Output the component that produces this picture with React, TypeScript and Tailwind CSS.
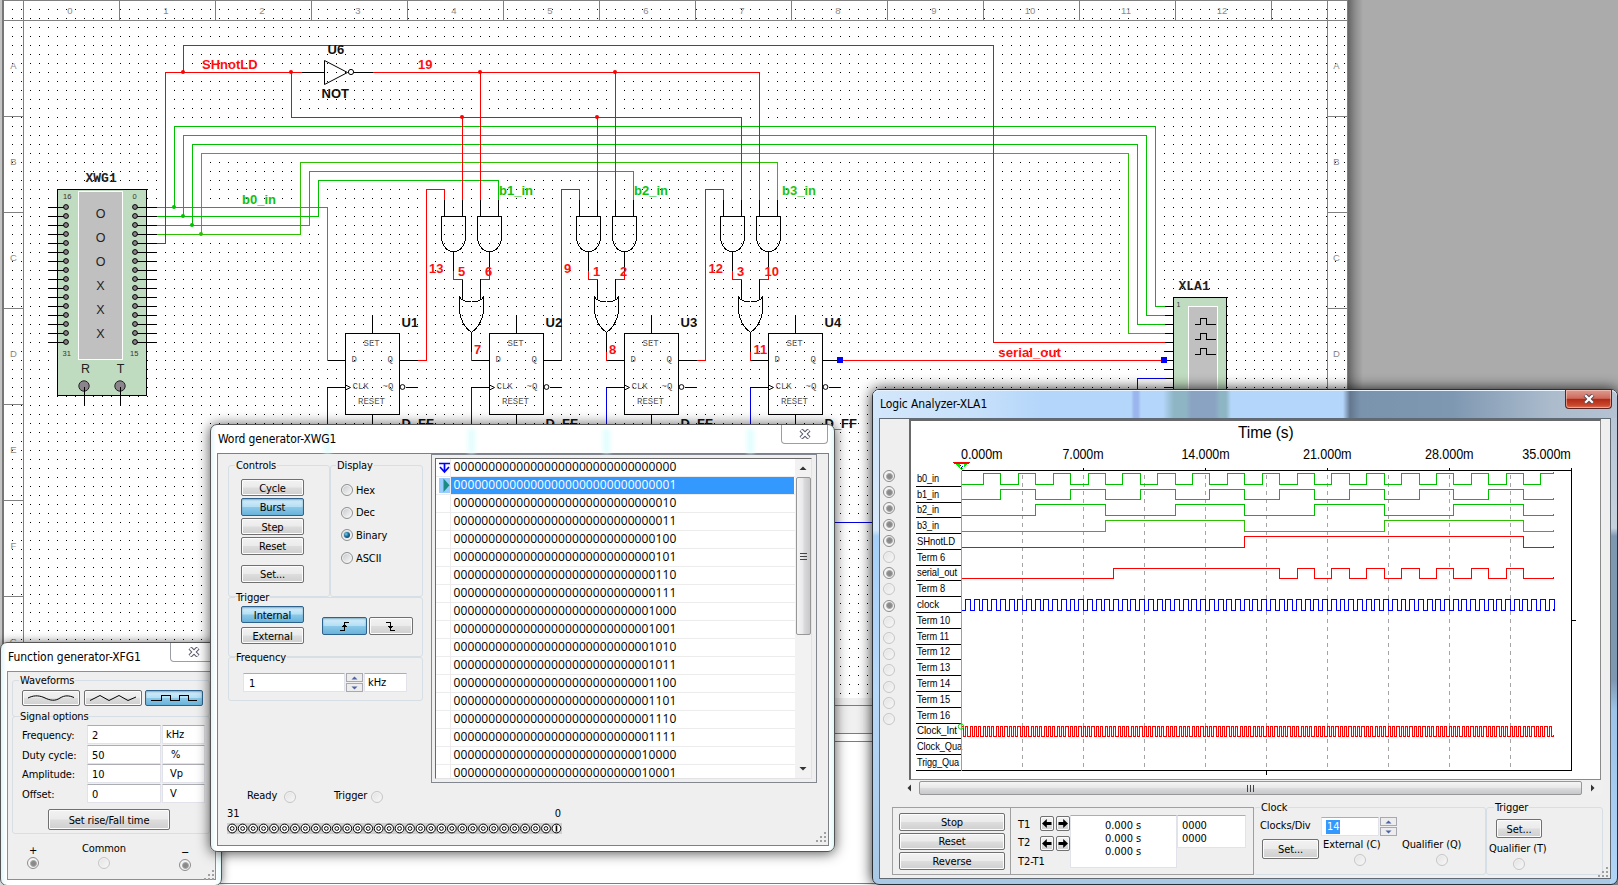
import React from "react";

const UI = "font-['DejaVu_Sans_Condensed','DejaVu_Sans','Noto_Sans',sans-serif] text-[11px] leading-[14px] tracking-[-0.1px] text-black";
const SANS = "'Liberation Sans', Arial, sans-serif";
const MONO = "'Liberation Mono', monospace";

const range = (n: number) => Array.from({ length: n }, (_, i) => i);

/* ---------- schematic sheet ---------- */

function Wire({ d, c = "#ff0000" }: { d: string; c?: string }) {
  return <path d={d} stroke={c} fill="none" strokeWidth={1} />;
}

function Net({ x, y, c = "#ff1010", children }: { x: number; y: number; c?: string; children: React.ReactNode }) {
  return (
    <text x={x} y={y} fill={c} fontFamily={SANS} fontWeight={700} fontSize={13}>
      {children}
    </text>
  );
}

function Junction({ x, y, c = "#ff0000" }: { x: number; y: number; c?: string }) {
  return <circle cx={x - 0.5} cy={y - 0.5} r={2} fill={c} shapeRendering="auto" />;
}

function AndGate({ x }: { x: number }) {
  return (
    <g stroke="#000" fill="none">
      <path d={`M${x} 216h24v21C${x + 24} 243 ${x + 20} 251 ${x + 12} 251C${x + 4} 251 ${x} 243 ${x} 237Z`} />
      <path d={`M${x + 3} 199V216M${x + 21} 199V216M${x + 12} 251V270`} />
    </g>
  );
}

function GateCluster({ x }: { x: number }) {
  return (
    <g>
      <AndGate x={x - 3} />
      <AndGate x={x + 33} />
      <Wire d={`M${x - 18} 360V189H${x}V199`} />
      <Wire d={`M${x + 9} 270V279H${x + 18}`} />
      <Wire d={`M${x + 45} 270V279H${x + 36}`} />
      <g stroke="#000" fill="none">
        <path d={`M${x + 18} 279V299M${x + 36} 279V299`} />
        <path d={`M${x + 15} 296.5Q${x + 18} 301.5 ${x + 27} 301.5Q${x + 36} 301.5 ${x + 39} 296.5V311Q${x + 37} 325 ${x + 27} 332Q${x + 17} 325 ${x + 15} 311Z`} />
        <path d={`M${x + 27} 332V351`} />
      </g>
      <Wire d={`M${x + 27} 351V360`} />
      <Wire d={`M${x + 27} 360H${x + 45}`} c="#000" />
    </g>
  );
}

function FlipFlop({ x, name }: { x: number; name: string }) {
  return (
    <g>
      <rect x={x} y={333} width={54} height={81} stroke="#000" fill="none" />
      <path d={`M${x + 27} 315V333M${x + 27} 414V425M${x + 54} 360H${x + 72}M${x - 18} 387H${x}M${x + 60} 387H${x + 72}`} stroke="#000" fill="none" />
      <path d={`M${x - 18} 425V387`} stroke="#0000e0" fill="none" />
      <path d={`M${x} 384.5L${x + 5} 387L${x} 389.5`} stroke="#000" fill="none" shapeRendering="auto" />
      <circle cx={x + 57} cy={386.5} r={2.4} stroke="#000" fill="#fff" shapeRendering="auto" />
      <g fontFamily={MONO} fontSize={9} fill="#555">
        <text x={x + 18} y={345.5}>SET</text>
        <text x={x + 6} y={361.5}>D</text>
        <text x={x + 42} y={361.5}>Q</text>
        <text x={x + 7} y={388.5}>CLK</text>
        <text x={x + 37} y={388.5}>~Q</text>
        <text x={x + 12.5} y={403.5}>RESET</text>
      </g>
      <Net x={x + 56} y={326.5} c="#111">{name}</Net>
      <Net x={x + 56} y={427} c="#111">D_FF</Net>
    </g>
  );
}

function Schematic() {
  const g = "#00c000";
  const g4 = "#2cc000";
  return (
    <svg width={1618} height={885} viewBox="0 0 1618 885" className="block" shapeRendering="crispEdges">
      <defs>
        <pattern id="dots" x={3} y={0} width={9} height={9} patternUnits="userSpaceOnUse">
          <rect x={0} y={0} width={1} height={1} fill="#000" />
        </pattern>
        <linearGradient id="edge" x1="0" x2="1" y1="0" y2="0">
          <stop offset="0" stopColor="#606060" />
          <stop offset="0.5" stopColor="#8c8c8c" />
          <stop offset="1" stopColor="#ababab" />
        </linearGradient>
      </defs>
      <rect width={1618} height={885} fill="#ababab" />
      <rect width={1347} height={885} fill="#fff" />
      <rect width={2} height={700} fill="#c4c4c4" />
      <rect x={2} width={2} height={700} fill="#767676" />
      <rect x={1347} width={16} height={700} fill="url(#edge)" />
      <rect x={6} y={2} width={1341} height={693} fill="url(#dots)" />
      <g stroke="#808080" fill="none" transform="translate(.5 .5)">
        <path d="M3 0H1347M3 20H1347M23 0V698M1327 0V698M1347 0V698" />
        {range(13).map((i) => (
          <path key={i} d={`M${119 + 96 * i} 0V20`} />
        ))}
        {range(7).map((i) => (
          <path key={i} d={`M3 ${116 + 96 * i}H23M1327 ${116 + 96 * i}H1347`} />
        ))}
      </g>
      <g fill="#8a8a8a" fontFamily={SANS} fontSize={9.5} textAnchor="middle">
        {range(13).map((i) => (
          <text key={i} x={70 + 96 * i} y={13.5}>{i}</text>
        ))}
        {["A", "B", "C", "D", "E", "F", "G"].map((l, i) => (
          <g key={l}>
            <text x={13.5} y={68.5 + 96 * i}>{l}</text>
            <text x={1336.5} y={68.5 + 96 * i}>{l}</text>
          </g>
        ))}
      </g>

      {/* bottom strips behind the windows */}
      <rect x={215} y={698} width={700} height={7} fill="#f0f0f0" />
      <rect x={215} y={705} width={700} height={29} fill="#f0f0f0" />
      <g stroke="#7c7c7c" transform="translate(.5 .5)">
        <path d="M215 705H900M215 733H900M215 741H900M200 883H900" />
      </g>

      <g transform="translate(.5 .5)">
        <Wire c={g} d="M174 207V126H1155V306H1164" />
        <Wire c={g} d="M183 216V135H1146V315H1164" />
        <Wire c={g} d="M192 225V144H1137V324H1164" />
        <Wire c={g4} d="M201 234V153H1128V333H1164" />
        <Wire c={g} d="M156 207H327V360" />
        <Wire c={g} d="M156 216H318V180H498V199" />
        <Wire c={g} d="M156 225H309V171H633V199" />
        <Wire c={g4} d="M156 234H300V162H777V199" />
        <Wire d="M156 243H165V72H301" />
        <Wire d="M183 72V45H993V342H1164" />
        <Wire d="M372 72H759V199M480 72V199M615 72V199" />
        <Wire d="M291 72V117H741V199M462 117V199M597 117V199" />
        <Wire d="M301 72H324M354 72H372" c="#000" />
        <path d="M324 60V84L347 72Z" stroke="#000" fill="none" shapeRendering="auto" />
        <circle cx={350.5} cy={71.5} r={2.6} stroke="#000" fill="#fff" shapeRendering="auto" />
        <Wire d="M327 360H345" c="#000" />
        <Wire d="M417 360H426M696 360H705M840 360H1164" />
        <Wire d="M1137 390V378H1164M834 522H880" c="#0000e0" />
        <GateCluster x={444} />
        <GateCluster x={579} />
        <GateCluster x={723} />
        <FlipFlop x={345} name="U1" />
        <FlipFlop x={489} name="U2" />
        <FlipFlop x={624} name="U3" />
        <FlipFlop x={768} name="U4" />
        <Junction x={174} y={207} c={g} />
        <Junction x={183} y={216} c={g} />
        <Junction x={192} y={225} c={g} />
        <Junction x={201} y={234} c={g4} />
        <Junction x={183} y={72} />
        <Junction x={291} y={72} />
        <Junction x={480} y={72} />
        <Junction x={615} y={72} />
        <Junction x={462} y={117} />
        <Junction x={597} y={117} />
        <rect x={836.5} y={356.5} width={6} height={6} fill="#0000ff" />
      </g>

      <Net x={202} y={69}>SHnotLD</Net>
      <Net x={418} y={69}>19</Net>
      <Net x={327.5} y={54} c="#111">U6</Net>
      <Net x={321.5} y={98} c="#111">NOT</Net>
      <Net x={242} y={204} c="#10c010">b0_in</Net>
      <Net x={499} y={195} c="#10c010">b1_in</Net>
      <Net x={634} y={195} c="#10c010">b2_in</Net>
      <Net x={782} y={195} c="#2cc010">b3_in</Net>
      <Net x={429} y={273}>13</Net>
      <Net x={458} y={276}>5</Net>
      <Net x={485} y={276}>6</Net>
      <Net x={564} y={273}>9</Net>
      <Net x={593} y={276}>1</Net>
      <Net x={620} y={276}>2</Net>
      <Net x={708.5} y={273}>12</Net>
      <Net x={737} y={276}>3</Net>
      <Net x={764.5} y={276}>10</Net>
      <Net x={474} y={354}>7</Net>
      <Net x={609} y={354}>8</Net>
      <Net x={753.5} y={354}>11</Net>
      <text x={998.3} y={356.5} fill="#ff1010" fontFamily={SANS} fontWeight={700} fontSize={13} textLength={62.7} lengthAdjust="spacingAndGlyphs">
        serial_out
      </text>

      {/* word generator symbol */}
      <g fontFamily={MONO} fontWeight={700} fontSize={13} fill="#222">
        <text x={85.5} y={182}>XWG1</text>
        <text x={1178.5} y={290}>XLA1</text>
      </g>
      <g transform="translate(.5 .5)">
        <rect x={57} y={189} width={89} height={206} fill="#c0dcc0" stroke="#000" />
        <rect x={78} y={191} width={44} height={168} fill="#c0c0c0" stroke="#fff" />
        {range(16).map((i) => (
          <g key={i} stroke="#000">
            <path d={`M48 ${207 + 9 * i}H66M135 ${207 + 9 * i}H156`} />
            <circle cx={65.5} cy={206.5 + 9 * i} r={2.4} fill="#8c848c" shapeRendering="auto" />
            <circle cx={134.5} cy={206.5 + 9 * i} r={2.4} fill="#8c848c" shapeRendering="auto" />
          </g>
        ))}
        <circle cx={83.5} cy={385.5} r={5.2} fill="#8c848c" stroke="#222" shapeRendering="auto" />
        <circle cx={119.5} cy={385.5} r={5.2} fill="#8c848c" stroke="#222" shapeRendering="auto" />
        <path d="M84 386V405M120 386V405" stroke="#000" />
      </g>
      <g fontFamily={SANS} fill="#222">
        <g fontSize={12.5} textAnchor="middle">
          {["O", "O", "O", "X", "X", "X"].map((c, i) => (
            <text key={i} x={100.5} y={218.3 + 24 * i}>{c}</text>
          ))}
          <text x={85.5} y={373}>R</text>
          <text x={120.5} y={373}>T</text>
        </g>
        <g fontSize={7.5} fill="#333">
          <text x={63} y={198.5}>16</text>
          <text x={132.5} y={198.5}>0</text>
          <text x={62.5} y={355.5}>31</text>
          <text x={130} y={356}>15</text>
        </g>
      </g>

      {/* logic analyzer symbol */}
      <g transform="translate(.5 .5)">
        {range(10).map((i) => (
          <path key={i} d={`M1164 ${306 + 9 * i}H1173`} stroke="#000" />
        ))}
        <rect x={1173} y={297} width={53} height={110} fill="#c0dcc0" stroke="#000" />
        <rect x={1188} y={306} width={29} height={110} fill="#c0c0c0" stroke="#fff" />
        {[324, 339, 354].map((y) => (
          <path key={y} d={`M1194 ${y}H1200V${y - 6}H1206V${y}H1215`} stroke="#000" fill="none" />
        ))}
        <rect x={1160.5} y={356.5} width={6} height={6} fill="#0000ff" />
      </g>
      <text x={1176.5} y={306.5} fontFamily={SANS} fontSize={7} fill="#333">1</text>
    </svg>
  );
}

/* ---------- shared controls ---------- */

function Btn({ on = false, className = "", children }: { on?: boolean; className?: string; children?: React.ReactNode }) {
  const look = on
    ? "border-[#2c628b] bg-[linear-gradient(#d8effb_0%,#b4dff5_48%,#8cc8e8_52%,#68b3db_100%)] shadow-[inset_0_1px_2px_#7fa9c0]"
    : "border-[#707070] bg-[linear-gradient(#f2f2f2_0%,#ebebeb_48%,#dddddd_52%,#cfcfcf_100%)] shadow-[inset_0_0_0_1px_#fcfcfc]";
  const pad = typeof children === "string" ? "pt-[2px]" : "";
  return <div className={`flex shrink-0 items-center justify-center rounded-[2px] border ${look} ${pad} ${className}`}>{children}</div>;
}

function Radio({ on = false }: { on?: boolean }) {
  return (
    <span className="flex h-3 w-3 shrink-0 items-center justify-center rounded-full border border-[#8e8f8f] bg-[linear-gradient(135deg,#c4c8cc,#fbfbfb)] shadow-[inset_0_0_0_1px_#f4f4f4]">
      {on && <span className="h-[6px] w-[6px] rounded-full bg-[radial-gradient(circle_at_35%_35%,#6fd0f4_0%,#1b6a94_45%,#0b2a45_100%)]" />}
    </span>
  );
}

function Lamp({ on = false }: { on?: boolean }) {
  if (!on)
    return <span className="block h-3 w-3 shrink-0 rounded-full border border-[#c6c6c6] bg-[linear-gradient(135deg,#e2e2e2,#f8f8f8)] shadow-[inset_0_0_0_1px_#f2f2f2]" />;
  return (
    <span className="flex h-3 w-3 shrink-0 items-center justify-center rounded-full border border-[#8c8c8c] bg-[#f4f4f4]">
      <span className="h-[7px] w-[7px] rounded-full border border-[#a8a8a8] bg-[#8a8a8a]" />
    </span>
  );
}

function Group({ title, className = "", legend = "ml-1.5", children }: { title: string; className?: string; legend?: string; children?: React.ReactNode }) {
  return (
    <fieldset className={`min-w-0 shrink-0 rounded-[3px] border border-[#d5dfe5] ${className}`}>
      <legend className={`h-[14px] whitespace-nowrap px-px leading-[16px] ${legend}`}>{title}</legend>
      {children}
    </fieldset>
  );
}

function Field({ className = "", children }: { className?: string; children?: React.ReactNode }) {
  return (
    <div className={`flex shrink-0 items-center rounded-[1px] border border-[#e2e3ea] border-t-[#abadb3] bg-white ${className}`}>{children}</div>
  );
}

function Spinner({ className = "" }: { className?: string }) {
  return (
    <div className={`flex w-[17px] shrink-0 flex-col gap-px ${className}`}>
      {[0, 1].map((i) => (
        <div key={i} className="flex h-[9px] items-center justify-center border border-[#a8a8b0] bg-[#ededed]">
          <svg width={7} height={4} viewBox="0 0 7 4">
            <path d={i ? "M0.5 0.5H6.5L3.5 3.6Z" : "M0.5 3.5H6.5L3.5 .4Z"} fill="#4f62a3" />
          </svg>
        </div>
      ))}
    </div>
  );
}

function CloseGlyph({ c = "#55566a" }: { c?: string }) {
  return (
    <svg width={12} height={10} viewBox="0 0 12 10">
      <path d="M2 1L10 9M10 1L2 9" stroke={c} strokeWidth={4.2} />
      <path d="M2.2 1.2L9.8 8.8M9.8 1.2L2.2 8.8" stroke="#fff" strokeWidth={2.2} />
    </svg>
  );
}

function Grip({ className = "" }: { className?: string }) {
  return (
    <svg width={11} height={11} viewBox="0 0 11 11" shapeRendering="crispEdges" className={className}>
      {[[8, 0], [8, 4], [8, 8], [4, 4], [4, 8], [0, 8]].map(([x, y]) => (
        <rect key={`${x}-${y}`} x={x} y={y} width={2} height={2} fill="#a0a0a0" />
      ))}
    </svg>
  );
}

/* ---------- function generator ---------- */

const fgRows = [
  ["Frequency:", "2", "kHz", "pl-[3px]", "h-5"],
  ["Duty cycle:", "50", "%", "pl-2", "h-[19px]"],
  ["Amplitude:", "10", "Vp", "pl-[7px]", "h-5"],
  ["Offset:", "0", "V", "pl-[7px]", "h-[19px]"],
];

function FunctionGenerator() {
  return (
    <div className={`absolute left-0 top-[642px] h-[244px] w-[222px] rounded-[7px] border border-[#555] bg-[linear-gradient(90deg,#dff5f8,#ffffff_5px,#ffffff_214px,#e8fcfd)] shadow-[0_0_10px_rgba(0,0,0,0.55)] ${UI}`}>
      <div className="flex h-[28px] justify-between">
        <div className="pl-[7px] pt-[7px] text-[12px] tracking-[-0.05px]">Function generator-XFG1</div>
        <div className="mr-[4px] flex h-[19px] w-[47px] items-center justify-center rounded-b-[4px] border border-t-0 border-[#9a9fa5]">
          <CloseGlyph />
        </div>
      </div>
      <div className="ml-[6px] h-[209px] w-[209px] border border-[#8a8f95] bg-[#efefef]">
        <Group title="Waveforms" className="ml-1 mt-px h-[44px] w-[198px]">
          <div className="ml-[9px] mt-[3px] flex gap-[3.5px]">
            <Btn className="h-4 w-[58px]">
              <svg width={48} height={9} viewBox="0 0 48 9" fill="none" stroke="#000">
                <path d="M1 4C6 1.5 11 1 17 3.5C23 6.5 28 7.5 33 4C38 1 42 1.5 47 3.5" />
              </svg>
            </Btn>
            <Btn className="h-4 w-[58px]">
              <svg width={48} height={9} viewBox="0 0 48 9" fill="none" stroke="#000">
                <path d="M1 6.5L11 1.5L20 6.5L30 1.5L39 6.5L47 3" />
              </svg>
            </Btn>
            <Btn on className="h-4 w-[58px]">
              <svg width={48} height={9} viewBox="0 0 48 9" fill="none" stroke="#000" shapeRendering="crispEdges">
                <path d="M1 6.5H11V1.5H20V6.5H29V1.5H38V6.5H47" />
              </svg>
            </Btn>
          </div>
        </Group>
        <Group title="Signal options" className="-mt-2 ml-1 h-[125px] w-[198px]">
          <div className="ml-[9px] mt-[2px]">
            {fgRows.map(([l, v, u, pad, h]) => (
              <div key={l} className={`flex ${h}`}>
                <div className="w-[65px] pt-1">{l}</div>
                <Field className="h-[19px] w-[74px] pl-[4px] pt-[3px]">{v}</Field>
                <Field className={`ml-px h-[19px] w-[43px] pt-px ${pad}`}>{u}</Field>
              </div>
            ))}
          </div>
          <Btn className="ml-[35px] mt-[6px] h-[21px] w-[122px]">Set rise/Fall time</Btn>
        </Group>
        <div className="mt-[7px] flex h-[32px] pl-[15px]">
          <div className="flex w-5 flex-col items-center pt-[4px]">
            <span className="leading-[12px]">+</span>
            <Lamp on />
          </div>
          <div className="ml-9 flex w-[50px] flex-col items-center gap-px pt-px">
            <span>Common</span>
            <Lamp />
          </div>
          <div className="ml-[46px] flex w-5 flex-col items-center pt-[6px]">
            <span className="leading-[12px]">−</span>
            <Lamp on />
          </div>
        </div>
        <Grip className="-mt-[3px] ml-[196px]" />
      </div>
    </div>
  );
}

/* ---------- word generator ---------- */

const words = range(18).map((n) => n.toString(2).padStart(32, "0"));

function WordList() {
  return (
    <div className="h-[329px] w-[386px] border border-[#828790] bg-[#efefef] p-[3px]">
      <div className="flex h-[321px] w-[377px] border border-[#696969] border-b-[#e3e3e3] border-r-[#e3e3e3] bg-white">
        <div className="h-[319px] flex-1 overflow-hidden">
          {words.map((w, i) => (
            <div key={i} className="flex h-[18px] border-b border-[#ececec]">
              <div className="flex w-[15px] items-center justify-end border-r border-[#ececec]">
                {i === 0 && (
                  <svg width={11} height={12} viewBox="0 0 11 12" fill="none" stroke="#0000ff" strokeWidth={1.7}>
                    <path d="M0 1.5H11M5.5 1.5V10M1 5L5.5 10L10 5" />
                  </svg>
                )}
                {i === 1 && (
                  <svg width={11} height={15} viewBox="0 0 11 15">
                    <rect width={11} height={15} fill="#99ccff" />
                    <path d="M4.5 0.5V14L10.5 7.2Z" fill="#1a8c84" />
                  </svg>
                )}
              </div>
              <div className={`mr-px flex-1 whitespace-nowrap pl-[2.5px] font-['Open_Sans','Noto_Sans',sans-serif] text-[12px] leading-[16px] tracking-[0.105px] ${i === 1 ? "bg-[#3399ff] text-white" : "text-black"}`}>
                {w}
              </div>
            </div>
          ))}
        </div>
        <div className="flex w-4 flex-col items-center bg-[#f2f2f2]">
          <svg width={8} height={18} viewBox="0 0 8 18">
            <path d="M.5 11H7.5L4 7.5Z" fill="#333" />
          </svg>
          <div className="flex h-[158px] w-[15px] flex-col items-center justify-center gap-[2px] rounded-[2px] border border-[#979797] bg-[linear-gradient(90deg,#f5f5f5,#e9e9eb_45%,#d9dadc_55%,#c8c8ca)]">
            {range(3).map((i) => (
              <span key={i} className="h-px w-[7px] bg-[#444]" />
            ))}
          </div>
          <svg width={8} height={10} viewBox="0 0 8 10" className="mb-[4px] mt-auto">
            <path d="M.5 3H7.5L4 6.5Z" fill="#333" />
          </svg>
        </div>
      </div>
    </div>
  );
}

function BitRow() {
  return (
    <svg width={335} height={11} viewBox="0 0 335 11" className="ml-[9px] mt-px block">
      <rect width={335} height={11} fill="#d0d0d0" />
      {range(32).map((i) => {
        const cx = 5.2 + i * 10.46;
        return (
          <g key={i} fill="#fff" stroke="#000" strokeWidth={1}>
            <circle cx={cx} cy={5.5} r={4.4} />
            {i < 31 ? <circle cx={cx} cy={5.5} r={1.9} /> : <path d={`M${cx} 2.5V8.5`} strokeWidth={1.6} />}
          </g>
        );
      })}
    </svg>
  );
}

function WordGenerator() {
  return (
    <div className={`absolute left-[210px] top-[424px] h-[428px] w-[625px] rounded-[7px] border border-[#555] bg-[linear-gradient(90deg,#e4f6f8,#ffffff_5px,#ffffff_618px,#e0fafa)] shadow-[0_1px_13px_rgba(0,0,0,0.7)] ${UI}`}>
      <div className="relative flex h-[28px] justify-between">
        {[117, 261, 396, 540].map((x) => (
          <span key={x} className="absolute top-[4px] h-[24px] w-[7px] bg-[#e2fdfd] blur-[2px]" style={{ left: x - 4 }} />
        ))}
        <div className="relative pl-[7px] pt-[7px] text-[12px]">Word generator-XWG1</div>
        <div className="relative mr-[6px] flex h-[19px] w-[47px] items-center justify-center rounded-b-[4px] border border-t-0 border-[#9a9fa5] bg-white">
          <CloseGlyph />
        </div>
      </div>
      <div className="ml-[6px] h-[393px] w-[612px] border border-[#7d8186] bg-[#efefef]">
        <div className="flex">
          <div className="w-[213px] pl-[10px] pt-1">
            <div className="flex">
              <Group title="Controls" className="h-[139px] w-[102px]">
                <div className="ml-[12px] flex flex-col pt-[7px]">
                  <Btn className="h-[17px] w-[63px]">Cycle</Btn>
                  <Btn on className="mt-[2px] h-[18px] w-[63px]">Burst</Btn>
                  <Btn className="mt-[2px] h-[17px] w-[63px]">Step</Btn>
                  <Btn className="mt-[2px] h-[18px] w-[63px]">Reset</Btn>
                  <Btn className="mt-[10px] h-[18px] w-[63px]">Set...</Btn>
                </div>
              </Group>
              <Group title="Display" legend="ml-[5px]" className="h-[139px] w-[93px]">
                <div className="ml-[10px] flex flex-col gap-[10.7px] pt-[12px]">
                  {["Hex", "Dec", "Binary", "ASCII"].map((t) => (
                    <div key={t} className="flex h-3 items-center gap-[3px]">
                      <Radio on={t === "Binary"} />
                      <span className="pt-px">{t}</span>
                    </div>
                  ))}
                </div>
              </Group>
            </div>
            <Group title="Trigger" className="-mt-[7px] h-[67px] w-[195px]">
              <div className="ml-[12px] flex">
                <div className="pt-[2px]">
                  <Btn on className="h-[17px] w-[63px]">Internal</Btn>
                  <Btn className="mt-1 h-[17px] w-[63px]">External</Btn>
                </div>
                <div className="ml-[18px] flex gap-[2px] pt-[13px]">
                  <Btn on className="h-[18px] w-[45px]">
                    <svg width={12} height={11} viewBox="0 0 12 11" fill="none" stroke="#000" shapeRendering="crispEdges">
                      <path d="M1 9.5H5.5V1.5H10M3 5.5H8M4 4.5H7" />
                    </svg>
                  </Btn>
                  <Btn className="h-[18px] w-[44px]">
                    <svg width={12} height={11} viewBox="0 0 12 11" fill="none" stroke="#000" shapeRendering="crispEdges">
                      <path d="M1 1.5H5.5V9.5H10M3 5.5H8M4 6.5H7" />
                    </svg>
                  </Btn>
                </div>
              </div>
            </Group>
            <Group title="Frequency" className="-mt-[7px] h-[51px] w-[195px]">
              <div className="ml-[14px] flex pt-[9px]">
                <Field className="h-[19px] w-[102px] pl-[5px] pt-[2px]">1</Field>
                <Spinner className="ml-px" />
                <Field className="ml-px h-[19px] w-[43px] pl-[3px] pt-px">kHz</Field>
              </div>
            </Group>
          </div>
          <WordList />
        </div>
        <div className="mt-[5px] flex h-4 items-center pl-[29px]">
          <span className="w-[37px]">Ready</span>
          <span className="pt-[2px]"><Lamp /></span>
          <span className="ml-[38px] w-[37px]">Trigger</span>
          <span className="pt-[2px]"><Lamp /></span>
        </div>
        <div className="mt-[3px] flex h-[15px] w-[343px] justify-between pl-[9px]">
          <span>31</span>
          <span>0</span>
        </div>
        <BitRow />
        <Grip className="-mt-[2px] ml-[598px]" />
      </div>
    </div>
  );
}

/* ---------- logic analyzer ---------- */

const STEP = 17.42;
const edge = (k: number) => Math.round(983 + STEP * k);
const X0 = 961;
const X1 = 1553;

function trace(edges: number[], hi: number, lo: number, startHigh = false) {
  let high = startHigh;
  let d = `M${X0} ${high ? hi : lo}`;
  edges.forEach((x) => {
    high = !high;
    d += `H${x}V${high ? hi : lo}`;
  });
  return `${d}H${X1}v-2`;
}

const b0 = trace(range(33).map(edge), 473, 484);
const b1 = trace(range(16).map((i) => edge(1 + 2 * i)), 489, 499);
const b2 = trace(range(8).map((i) => edge(3 + 4 * i)), 504, 515);
const b3 = trace(range(4).map((i) => edge(7 + 8 * i)), 520, 531);
const shift = trace([edge(15), edge(31)], 536, 547);
const serial = trace([1113, ...range(15).map((i) => edge(17 + i))], 568, 578);
const clockPath = trace(range(136).map((i) => Math.round(965 + (STEP / 4) * i + (i % 2 ? 0.6 : 0))), 599, 610);
const clockInt = trace(range(271).map((i) => Math.round(963 + (STEP / 8) * i)), 726, 736, true);

const channels: [string, number, number][] = [
  ["b0_in", 486, 22], ["b1_in", 502, 22], ["b2_in", 517, 22], ["b3_in", 533, 22], ["SHnotLD", 549, 38],
  ["Term 6", 565, 28], ["serial_out", 580, 40], ["Term 8", 596, 28], ["clock", 612, 22], ["Term 10", 628, 33],
  ["Term 11", 644, 32], ["Term 12", 659, 33], ["Term 13", 675, 33], ["Term 14", 691, 33], ["Term 15", 707, 33],
  ["Term 16", 723, 33], ["Clock_Int", 738, 40], ["Clock_Qua", 754, 45], ["Trigg_Qua", 770, 42],
];

const ticks: [string, number, number][] = [
  ["0.000m", 961, 41.5], ["7.000m", 1062.5, 41], ["14.000m", 1181.5, 48], ["21.000m", 1303, 48.5],
  ["28.000m", 1425, 48.5], ["35.000m", 1522.3, 48.5],
];

function Plot() {
  return (
    <svg width={688} height={357} viewBox="911 421 688 357" className="block" shapeRendering="crispEdges" fontFamily={SANS}>
      <text x={1238} y={438} fontSize={16} textLength={55.5} lengthAdjust="spacingAndGlyphs">Time (s)</text>
      {ticks.map(([t, x, w]) => (
        <text key={t} x={x} y={459} fontSize={14} textLength={w} lengthAdjust="spacingAndGlyphs">{t}</text>
      ))}
      {channels.map(([t, y, w]) => (
        <text key={t} x={917} y={y - 4} fontSize={10.5} textLength={w} lengthAdjust="spacingAndGlyphs">{t}</text>
      ))}
      <g transform="translate(.5 .5)" fill="none" stroke="#000">
        {range(9).map((i) => (
          <path key={i} d={`M${1022 + 61 * i} 474V770`} stroke="#a4a4a4" strokeDasharray="4 4" />
        ))}
        <path d="M961 470H1571V770M915 770H1571M1571 470V467M1571 620H1575M1266 770V774" />
        {range(10).map((i) => (
          <path key={i} d={`M${1022 + 61 * i} ${i % 2 ? 467 : 469}V470`} />
        ))}
        {channels.slice(0, 18).map(([t, y]) => (
          <path key={t} d={`M915 ${y}H961`} />
        ))}
        <path d={b0} stroke="#00c000" />
        <path d={b1} stroke="#00c000" />
        <path d={b2} stroke="#00c000" />
        <path d={b3} stroke="#2cc000" />
        <path d={shift} stroke="#ff0000" />
        <path d={serial} stroke="#ff0000" />
        <path d={clockPath} stroke="#0000ff" />
        <path d={clockInt} stroke="#ff0000" />
        <path d="M961 470V770" stroke="#ff69b4" />
        <circle cx={960.5} cy={726} r={2.7} stroke="#00e000" shapeRendering="auto" />
      </g>
      <path d="M953 462H970L961.5 470Z" fill="#00ee00" />
      <path d="M953 462H970L968.5 464H954.5Z" fill="#ff0000" />
      <path d="M959.5 464H963.5V468H959.5Z" fill="#fff" />
      <path d="M960 465h1v1h-1zM962 466h1v1h-1zM961 467h1v2h-1z" fill="#0000ff" />
    </svg>
  );
}

function ArrowBtn({ right = false }: { right?: boolean }) {
  return (
    <Btn className="h-[15px] w-[14px]">
      <svg width={10} height={9} viewBox="0 0 10 9" className={right ? "rotate-180" : ""}>
        <path d="M0 4.5L4.8 0V3H9.5V6H4.8V9Z" fill="#000" />
      </svg>
    </Btn>
  );
}

function LogicAnalyzer() {
  const connected = [0, 1, 2, 3, 4, 6, 8];
  return (
    <div className={`absolute left-[872px] top-[389px] h-[496px] w-[746px] rounded-[7px] border border-[#2a2f36] [background:linear-gradient(#b4c2d4_0px,#c6d2de_138px,#7f98b2_146px,#7f98b2_290px,#9cc4e8_320px,#b0d4f6)_right/7px_100%_no-repeat,linear-gradient(#cfe4f8_0px,#d6e8fa_140px,#a6d0f8_146px,#b6d8fa_300px,#a8c8e6)] shadow-[0_0_14px_rgba(0,0,0,0.85)] ${UI}`}>
      <div className="flex h-[28px] justify-between rounded-t-[6px] bg-[linear-gradient(90deg,#d3e7fb_0px,#c8e1fa_100px,#b4d6fa_170px,#b4d6fa_258px,#9bb6ee_261px,#9bb6ee_265px,#b4d6fa_268px,#b4d6fa_290px,#8db5c4_301px,#8db5c4_313px,#8ba3c2_318px,#8ba3c2_342px,#8db5c4_347px,#8db5c4_353px,#b4d6fa_358px,#b4d6fa_470px,#63788f_477px,#7b94ae_488px,#7f98b2_580px,#acbccd_680px,#b4c2d2)] shadow-[inset_0_1px_0_#e8f3fd]">
        <div className="pl-[7px] pt-[7px] text-[12px]">Logic Analyzer-XLA1</div>
        <div className="mr-[5px] flex h-[19px] w-[47px] items-center justify-center rounded-b-[4px] border border-t-0 border-[#5a2222] bg-[linear-gradient(#dd9c92_0%,#cf6a5c_46%,#b22a16_52%,#c8482e_85%,#dd7a5c_100%)] shadow-[inset_0_0_0_1px_rgba(255,220,210,0.5)]">
          <CloseGlyph c="#5b4a55" />
        </div>
      </div>
      <div className="relative mx-[6px] h-[461px] border border-[#5f6a75] bg-[#efefef]">
        <div className="flex">
          <div className="flex w-[29px] flex-col items-center pr-[11px] pt-[49px]">
            {range(16).map((i) => (
              <div key={i} className="flex h-[16.2px] items-center">
                <Lamp on={connected.includes(i)} />
              </div>
            ))}
          </div>
          <div className="h-[361px] w-[692px] border-2 border-b border-r border-[#696969] border-b-[#8a8a8a] border-r-[#8a8a8a] bg-white">
            <Plot />
          </div>
        </div>
        <div className="ml-[25px] mt-px flex h-[14px] w-[698px] items-center bg-[#f0f0f0]">
          <svg width={14} height={10} viewBox="0 0 14 10"><path d="M6 1.5V8.5L2.5 5Z" fill="#333" /></svg>
          <div className="flex h-[14px] w-[663px] items-center justify-center gap-[2px] rounded-[2px] border border-[#979797] bg-[linear-gradient(#f5f5f5,#e9e9eb_45%,#d9dadc_55%,#c8c8ca)]">
            {range(3).map((i) => (
              <span key={i} className="h-[7px] w-px bg-[#444]" />
            ))}
          </div>
          <svg width={14} height={10} viewBox="0 0 14 10" className="ml-1"><path d="M5 1.5V8.5L8.5 5Z" fill="#333" /></svg>
        </div>
        <div className="ml-[12px] mt-[5px] flex">
          <div className="mt-[7px] flex h-[68px] w-[362px] border border-[#a0a0a0]">
            <div className="flex w-[118px] shrink-0 flex-col gap-[2px] border-r border-[#a0a0a0] pl-[6px] pt-[5px]">
              {["Stop", "Reset", "Reverse"].map((t) => (
                <Btn key={t} className="h-[17.5px] w-[106px]">{t}</Btn>
              ))}
            </div>
            <div className="ml-[7px] w-[22px] pt-[10px]">
              <div className="h-[18px]">T1</div>
              <div className="h-[19px]">T2</div>
              <div className="whitespace-nowrap">T2-T1</div>
            </div>
            <div className="grid h-[44px] grid-cols-[16px_14px] content-start gap-y-[5px] pt-[8px]">
              <ArrowBtn />
              <ArrowBtn right />
              <ArrowBtn />
              <ArrowBtn right />
            </div>
            <Field className="mt-[7px] h-[53px] w-[107px] flex-col pr-px pt-[3px] leading-[13px]">
              <span>0.000 s</span>
              <span>0.000 s</span>
              <span>0.000 s</span>
            </Field>
            <Field className="mt-[7px] h-[33px] w-[69px] flex-col items-start pl-[4px] pt-[3px] leading-[13px]">
              <span className="self-start">0000</span>
              <span className="self-start">0000</span>
            </Field>
          </div>
          <Group title="Clock" className="h-[75px] w-[232px] border-l-0" legend="ml-[6px]">
            <div className="ml-[6px] flex pt-[3px]">
              <div className="w-[61px] pt-[2px]">Clocks/Div</div>
              <Field className="h-[19px] w-[58px] border-[#b5cfe7] border-t-[#3d7bad] pl-[4px]">
                <span className="bg-[#3399ff] px-px text-white">14</span>
              </Field>
              <Spinner className="ml-px" />
            </div>
            <div className="ml-[8px] flex">
              <Btn className="mt-[3px] h-[20px] w-[57px]">Set...</Btn>
              <div className="ml-[4px] flex w-[74px] flex-col items-center gap-[2px] pt-[2px]">
                <span className="self-start whitespace-nowrap">External (C)</span>
                <Lamp />
              </div>
              <div className="ml-[5px] flex w-[79px] flex-col items-center gap-[2px] pt-[2px]">
                <span className="self-start whitespace-nowrap">Qualifier (Q)</span>
                <Lamp />
              </div>
            </div>
          </Group>
          <Group title="Trigger" className="h-[75px] w-[117px]" legend="ml-[7px]">
            <Btn className="ml-[9px] mt-[5px] h-[19px] w-[46px]">Set...</Btn>
            <div className="ml-[2px] mt-[4px] flex w-[59px] flex-col items-center gap-[2px]">
              <span className="self-start whitespace-nowrap">Qualifier (T)</span>
              <Lamp />
            </div>
          </Group>
        </div>
        <Grip className="absolute bottom-0 right-px" />
      </div>
    </div>
  );
}

export default function App() {
  return (
    <div className="relative h-[885px] w-[1618px] overflow-hidden bg-[#ababab]">
      <Schematic />
      <FunctionGenerator />
      <WordGenerator />
      <LogicAnalyzer />
    </div>
  );
}
